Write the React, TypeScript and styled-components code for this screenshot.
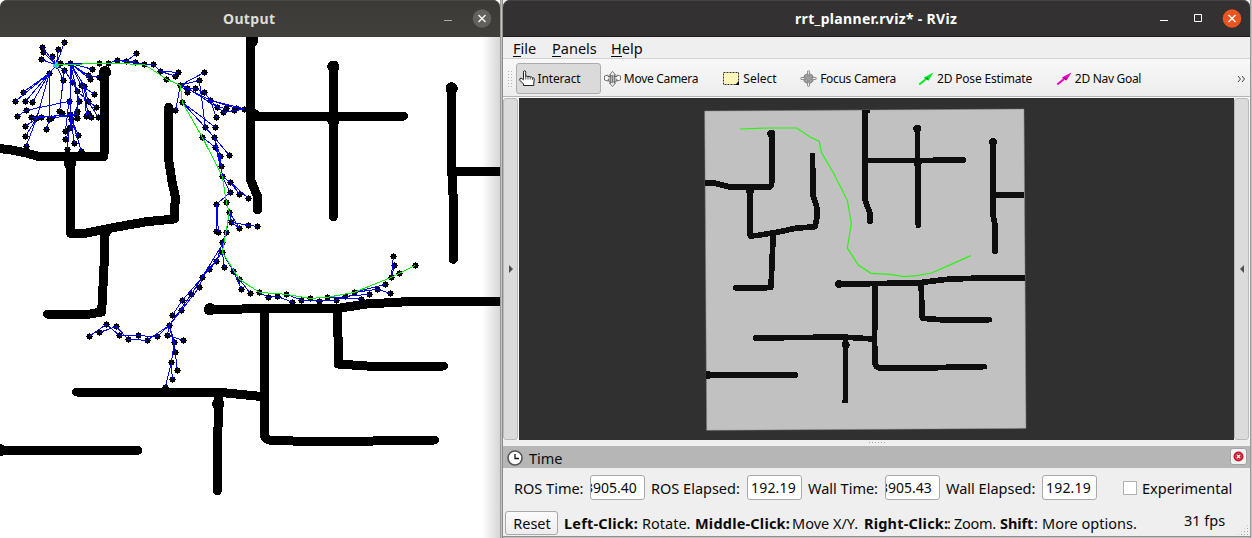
import React from 'react';
import styled, { createGlobalStyle } from 'styled-components';

const GlobalStyle = createGlobalStyle`
  * { box-sizing: border-box; }
  body { margin: 0; background: #c4c4c4; overflow: hidden; }
`;

const Desktop = styled.div`
  display: grid;
  grid-template-columns: 500px 3px 747px 2px;
  width: 1252px;
  height: 538px;
  overflow: hidden;
  font-family: 'Noto Sans', 'Open Sans', sans-serif;
  color: #0a0a0a;
`;
const Gap = styled.div`
  background: linear-gradient(90deg, #9a9a9a 0 1px, #c2c2c2 1px 2px, #8c8c8c 2px);
`;
const OutputWindow = styled.section`
  display: flex;
  flex-direction: column;
  height: 538px;
  background: #fff;
`;
const RvizWindow = styled.section`
  display: flex;
  flex-direction: column;
  height: 537px;
  background: #efefef;
  border-bottom: 1px solid #8f8f8f;
`;
const TitleBar = styled.header<{ $focused?: boolean }>`
  display: grid;
  grid-template-columns: 1fr auto 1fr;
  align-items: center;
  height: 37px;
  flex: none;
  border-radius: 7px 7px 0 0;
  background: ${p => (p.$focused ? '#333132' : 'linear-gradient(#3b3a37, #403f3c)')};
  box-shadow: inset 0 1px 0 ${p => (p.$focused ? '#454344' : '#4c4b48')}${p => (p.$focused ? ', inset 0 -1px 0 #1f1e1e' : '')};
  color: ${p => (p.$focused ? '#fff' : '#dedcd8')};
`;
const Controls = styled.div<{ $right: number }>`
  grid-column: 3;
  display: flex;
  justify-content: flex-end;
  align-items: center;
  padding-right: ${p => p.$right}px;
`;
const Text = styled.span<{ $w: number; $size?: number; $ls?: number; $bold?: boolean }>`
  display: inline-block;
  flex: none;
  width: ${p => p.$w}px;
  font-size: ${p => p.$size ?? 14.5}px;
  letter-spacing: ${p => p.$ls ?? (p.$bold ? 0.2 : 0)}px;
  font-weight: ${p => (p.$bold ? 700 : 400)};
  line-height: 20px;
  white-space: nowrap;
`;
const Title = styled(Text)`
  grid-column: 2;
`;
const PlanCanvas = styled.div`
  flex: 1;
  position: relative;
  svg { display: block; }
  &::after {
    content: '';
    position: absolute;
    inset: 0 0 0 auto;
    width: 18px;
    background: linear-gradient(90deg, rgba(0,0,0,0), rgba(0,0,0,.16));
  }
`;
const MenuBar = styled.nav`
  display: flex;
  align-items: center;
  height: 22px;
  flex: none;
  padding-left: 10px;
  background: #efefef;
  border-bottom: 1px solid #d2d2d2;
  gap: 15px;
`;
const Mnemonic = styled.span`
  box-shadow: 0 -1px 0 #0a0a0a inset;
  display: inline-block;
  line-height: 17px;
`;
const ToolBar = styled.div`
  display: flex;
  align-items: center;
  height: 38px;
  flex: none;
  padding: 2px 0 0 4px;
  background: linear-gradient(#f8f8f8, #ededed);
  border-bottom: 1px solid #b4b4b4;
`;
const Grip = styled.div`
  width: 5px;
  height: 17px;
  margin-right: 4px;
  background-image: radial-gradient(circle, #b5b5b5 0.8px, transparent 0.9px);
  background-size: 3px 3px;
`;
const Tool = styled.button<{ $w: number; $active?: boolean }>`
  display: flex;
  align-items: center;
  flex: none;
  gap: 2px;
  width: ${p => p.$w}px;
  height: 31px;
  padding: 0 0 0 2px;
  color: inherit;
  font-family: inherit;
  border: 1px solid ${p => (p.$active ? '#adadad' : 'transparent')};
  border-radius: 3px;
  background: ${p => (p.$active ? '#dadada' : 'transparent')};
  svg { display: block; flex: none; }
`;
const Overflow = styled.div`
  margin-left: auto;
  padding-right: 4px;
  svg { display: block; }
`;
const Center = styled.div`
  display: grid;
  grid-template-columns: 16px 715px 16px;
  height: 343px;
  flex: none;
  padding-top: 1px;
  background: #fafafa;
`;
const DockHandle = styled.div<{ $side: 'left' | 'right' }>`
  display: flex;
  align-items: center;
  justify-content: center;
  margin: 0 1px 0 0;
  background: #dbdbdb;
  border: 1px solid #b9b9b9;
  border-radius: 3px;
  &::after {
    content: '';
    border: 4px solid transparent;
    border-width: 4px ${p => (p.$side === 'right' ? 4 : 0)}px 4px ${p => (p.$side === 'left' ? 4 : 0)}px;
    border-${p => (p.$side === 'left' ? 'left' : 'right')}-color: #4e4e4e;
  }
`;
const View = styled.div`
  background: #303030;
  svg { display: block; }
`;
const Splitter = styled.div`
  display: flex;
  justify-content: center;
  padding-top: 1px;
  height: 6px;
  flex: none;
  &::after {
    content: '';
    width: 18px;
    height: 3px;
    background-image: radial-gradient(circle, #a5a5a5 0.8px, transparent 0.9px);
    background-size: 3px 3px;
  }
`;
const PanelHeader = styled.div`
  display: flex;
  align-items: center;
  height: 22px;
  flex: none;
  gap: 6px;
  padding: 1px 3px 0 4px;
  background: #b6b6b6;
`;
const PanelClose = styled.button`
  display: grid;
  place-items: center;
  width: 17px;
  height: 17px;
  margin: -2px 0 0 auto;
  padding: 0;
  border: 1px solid #a2a2a2;
  border-radius: 3px;
  background: #f6f6f6;
`;
const TimeRow = styled.div`
  display: flex;
  align-items: center;
  height: 39px;
  flex: none;
  padding-left: 11px;
  > ${Text} { padding-top: 1px; }
`;
const Field = styled.div<{ $clipped?: boolean }>`
  display: flex;
  justify-content: flex-end;
  align-items: center;
  flex: none;
  width: 55px;
  height: 25px;
  margin-right: 6px;
  padding-right: ${p => (p.$clipped ? 3 : 1)}px;
  overflow: hidden;
  border: 1px solid #a9a9a9;
  border-radius: 3px;
  background: #fff;
`;
const CheckBox = styled.div`
  width: 14px;
  height: 14px;
  margin: 0 5px 0 20px;
  border: 1px solid #b2b2b2;
  background: #fff;
`;
const StatusRow = styled.div`
  display: flex;
  align-items: center;
  flex: 1;
  padding: 2px 0 0 2px;
`;
const Reset = styled.button`
  display: flex;
  align-items: center;
  width: 53px;
  height: 24px;
  margin-right: 6px;
  padding: 1px 0 0 6px;
  font-family: inherit;
  color: inherit;
  border: 1px solid #a9a9a9;
  border-radius: 3px;
  background: linear-gradient(#fbfbfb, #ededed);
`;
const Fps = styled.div`
  display: flex;
  margin: -6px 0 0 47px;
`;
const SizeGrip = styled.div`
  align-self: flex-end;
  width: 12px;
  height: 12px;
  margin-left: 10px;
  background-image: radial-gradient(circle, #a8a8a8 0.8px, transparent 0.9px);
  background-size: 3px 3px;
  clip-path: polygon(100% 0, 100% 100%, 0 100%);
`;

/* Drawing units are a third of a pixel. */
const nodes = [
  127,142,193,127,175,149,130,157,123,178,157,169,169,195,181,191,211,190,193,210,148,220,277,208,265,227,271,238,
  298,231,190,241,217,246,243,256,254,259,283,283,231,274,69,277,46,304,77,304,97,307,207,304,238,304,264,304,289,322,
  79,331,52,349,179,334,186,341,231,334,230,344,94,352,110,355,125,352,149,358,155,354,211,344,215,358,232,355,
  259,349,265,340,273,352,295,352,139,388,76,379,196,394,208,385,210,382,235,406,76,409,196,418,223,430,78,440,
  202,448,244,453,298,190,325,190,352,181,379,184,409,160,406,186,433,193,460,193,481,214,535,217,527,229,500,238,
  541,256,613,217,598,241,562,264,586,265,613,277,562,277,547,307,527,331,631,301,652,322,679,325,709,325,733,327,
  670,337,704,332,649,352,616,382,646,382,607,412,643,412,646,442,661,469,688,466,664,499,667,529,691,547,691,577,
  719,583,745,595,679,607,649,613,688,637,695,667,719,685,745,676,772,679,648,694,655,697,679,697,667,727,667,757,
  650,784,673,802,628,808,700,814,718,838,725,868,751,880,778,877,805,892,832,889,859,883,878,907,904,900,931,895,
  958,903,982,892,1009,900,1037,889,1063,877,1084,897,1108,883,1132,868,1171,880,1156,853,1174,832,1198,820,
  1183,796,1180,769,1246,796,607,832,598,862,574,883,547,901,544,931,517,946,508,976,502,1006,472,1009,523,1027,
  550,1021,526,1057,514,1087,532,1111,517,1138,496,1162,268,1009,299,997,319,973,349,980,358,1006,385,1018,
  415,1006,442,1021,
];
const snap = (v: number) => Math.floor(v / 3) * 3;
const nodePath = Array.from({ length: nodes.length / 2 }, (_, i) => {
  const x = snap(nodes[2 * i]);
  const y = snap(nodes[2 * i + 1]);
  return `M${x - 6} ${y - 6}h15v15h-15zM${x - 9} ${y}h21v3h-21zM${x} ${y - 9}h3v21h-3z`;
}).join('');

const edges = `
M169 195L127 142M169 195L193 127M169 195L175 149M169 195L130 157M169 195L123 178M169 195L157 169M169 195L148 220M169 195L193 210
M169 195L211 190M148 220L69 277M148 220L46 304M148 220L77 304M148 220L97 307M148 220V358M148 220L110 355L78 440
M169 195L190 241M193 210L179 334M193 210L217 246M211 190L277 208M211 190L265 227M211 190L271 238M265 227L298 231
M211 190L243 256L283 283M211 190L254 259L264 304M211 190L231 274L289 322M211 190V385L196 418M211 190L217 246L231 274V334
M79 331L207 304M79 331L52 349M94 352L230 344L155 354M110 355L125 352L211 344M76 379L110 355L76 409M149 358L139 388
M243 256L265 340L273 352M254 259L259 349M264 304L295 352M231 274L238 304L215 358L244 453M215 358L235 406M207 304L196 394M211 344L223 430M208 385L202 448M232 334V355
M211 190L298 190L325 190L352 181L406 186M379 184L409 160M352 181L433 193L460 193L481 214L535 217M481 214L527 229M433 193L500 238L541 256
M541 256L613 217M541 256L598 241L616 382M541 256L562 264L586 265L613 277M541 256L527 331M541 256L631 301L709 325M541 256L562 277M562 264L652 322L679 325M613 277L631 301L733 327M631 301L649 352M631 301L670 337L704 332L733 327
M547 307L616 382M547 307L646 382M547 307L643 412M607 412L646 442M643 412L688 466M643 412L661 469L667 529M643 412L664 499M648 442L661 499
M667 529L691 547L719 583M691 547L745 595M667 529L691 577L649 613L648 694M651 613L655 697M667 529L679 607L688 637L695 667L745 676L772 679M688 637L719 685M695 667L719 685M688 637L679 697L667 727V757
M667 727L650 784L628 808L607 832L547 901L517 946M667 757L607 832L598 862L544 931L508 976M660 745L574 883L508 976M667 757L673 802M667 757L700 814L718 838L778 877
M700 814L725 868M718 838L751 880M778 877L805 892L832 889L878 907M778 877L859 883L904 900L958 903L1009 900M859 883L931 895L982 892L1084 897M1009 900L1037 889L1108 883M1063 877L1132 868L1171 880M1063 877L1156 853M1063 877L1174 832L1180 769M1174 832L1183 796
M508 976L472 1009L358 1006L319 973L268 1009M508 976L472 1000L442 1021L385 1018L349 980L299 997M508 976L502 1006L550 1021M508 976L526 1057L532 1111M508 976L523 1027L514 1087L517 1138M523 1027L514 1087L496 1162`;

const planWalls = `
M0 446L30 449L75 458L115 469H312L315 217M211 480L212 700L245 702L350 681L440 665L523 657L526 590L517 550L506 480L506 322
M315 690L312 800L305 936L270 942H142M753 111L752 540L772 588V630M753 348H1211M1000 200V650M1353 263L1355 510L1360 600V778M1355 513H1500
M630 928L1020 924L1100 912L1240 904L1500 903M792 925V1185L793 1305Q795 1318 815 1322L1000 1325L1304 1320M1013 925L1015 1092L1100 1098H1330
M230 1176H650L790 1190M655 1190L652 1472M0 1351H413`;

const planBlobs = [[315, 217], [210, 490], [757, 121], [1000, 200], [1000, 362], [1355, 265], [630, 928], [655, 1212], [764, 346], [0, 1351], [316, 694]];

const mapWalls = `
M15 249H42L90 261H205Q215 262 215 250V100M150 270L151 408L175 406L240 395L285 385L345 380L351 350L350 320L340 290L337 160
M218 400V440L213 562L190 564H108M495 30V300L510 340V364M500 182L700 181L790 180M652 85L655 376M878 125L880 350L885 375V454M885 285H973
M415 553L660 548L740 538L840 534H975M525 550V670L523 710L526 795Q530 804 545 804H690L765 801L853 800M663 545L667 655L720 659H868
M166 714L430 711L520 717M437 720L436 908M19 825H286`;

const PlanDrawing = () => (
  <svg width="500" height="501" viewBox="0 111 1500 1503" shapeRendering="crispEdges" fill="none">
    <path d={planWalls} stroke="#000" strokeWidth="27" strokeLinecap="round" strokeLinejoin="round" />
    {planBlobs.map(([x, y]) => <circle key={`${x}-${y}`} cx={x} cy={y} r="18.500" fill="#000" />)}
    <path d={nodePath} fill="#000" />
    <path d={edges} stroke="#0000f0" strokeWidth="3" />
    <path d="M160 196H178M169 187V205" stroke="#2fc4ee" strokeWidth="7" />
    <path d="M169 195L298 190L433 193L500 238L541 256L547 307L607 412L667 529L679 607L688 637L667 757L718 838L778 877L859 883L931 895L982 892L1063 877L1174 832L1246 796" stroke="#00f000" strokeWidth="3" />
  </svg>
);

const MapDrawing = () => (
  <svg width="715" height="342" viewBox="-543 -6 2145 1026" fill="none">
    <path d="M14 33L972 27L978 985L20 991Z" fill="#c1c1c1" stroke="#828282" strokeWidth="1.500" />
    <g shapeRendering="crispEdges">
      <path d={mapWalls} stroke="#0e0e0e" strokeWidth="17" strokeLinejoin="round" />
      {[[214, 101], [652, 86], [653, 190], [879, 126], [417, 552], [150, 274], [437, 734]].map(([x, y]) => (
        <circle key={`${x}-${y}`} cx={x} cy={y} r="12" fill="#0e0e0e" />
      ))}
      {[[790, 180], [655, 376], [885, 454], [510, 364], [868, 659], [853, 800], [286, 825], [108, 564], [166, 714]].map(([x, y]) => (
        <circle key={`${x}-${y}`} cx={x} cy={y} r="8.500" fill="#0e0e0e" />
      ))}
      <path d="M487 30h22v10h-22zM19 814h10v22h-10z" fill="#0e0e0e" />
    </g>
    <path d="M120 87L210 84H290L332 112L358 124L364 157L400 218L442 301L454 370L442 444L475 495L513 520L570 523L612 530L650 527L695 519L752 494L812 467" stroke="#2bf50f" strokeWidth="3.600" />
  </svg>
);

const HandIcon = () => (
  <svg width="16" height="17" viewBox="0 0 16 17">
    <path d="M4.500 9.500V2.200q0-1.500 1.100-1.500T6.700 2.200v4.200q1.200-.9 2.200.2 1.400-.7 2.300.4 1.500-.5 2.100.7 1.800-.2 2 1.200L14.800 13v2.500H4.500V14L.8 10.200q-.3-2 1.200-2.200L4.500 9.800" fill="#fff" stroke="#222" strokeLinejoin="round" />
    <path d="M6.800 6v3.500M9 6.500v3M11.200 7v2.500M13.400 7.700V10" stroke="#222" strokeWidth=".8" />
  </svg>
);
const MoveIcon = () => (
  <svg width="17" height="16" viewBox="0 0 17 16" fill="none" stroke="#555" strokeWidth=".8">
    <circle cx="8.500" cy="8" r="4.200" fill="#e6e6e6" />
    <path d="M7 4H5.500l3-3.500 3 3.500H10v1.500l3 0V4l3.500 1v4L13 10V8.500M7 4v1.500H4V4L.5 5v4L4 10V8.500M7 12H5.500l3 3.500 3-3.500H10v-1.500M7 12v-1.500" fill="#fafafa" />
    <path d="M6.500 4.500v7M8.500 3.500v9M10.500 4.500v7M4.500 6h8M4.500 8h8M4.500 10h8" strokeWidth=".6" />
  </svg>
);
const SelectIcon = () => (
  <svg width="17" height="14" viewBox="0 0 17 14">
    <rect x=".5" y=".5" width="15" height="12" fill="#fdf6ba" stroke="#333" strokeDasharray="2 1" />
    <path d="M12 13l4-4v4z" fill="#000" />
  </svg>
);
const FocusIcon = () => (
  <svg width="17" height="17" viewBox="0 0 17 17" fill="none">
    <circle cx="8.500" cy="8.500" r="4.800" fill="#d8d8d8" stroke="#777" strokeWidth="1.100" />
    <path d="M7.500 1q1-.8 2 0v6.500H16q.8 1 0 2H9.500V16q-1 .8-2 0V9.500H1q-.8-1 0-2h6.500z" fill="#e2e2e2" stroke="#808080" strokeWidth=".8" />
    <path d="M6 5v7M11 5v7M5 6h7M5 11h7M8.500 4v9M4 8.500h9" stroke="#888" strokeWidth=".7" />
  </svg>
);
const ArrowIcon = ({ color, dark }: { color: string; dark: string }) => (
  <svg width="16" height="14" viewBox="0 0 16 14">
    <path d="M1.300 12.500L8 7" stroke={color} strokeWidth="2.200" />
    <path d="M15.500.5L5.800 5.500l4.700 3z" fill={color} />
    <path d="M6.500 6l3.500-.5.5 3z" fill={dark} />
  </svg>
);

const labelOf = (word: string) => <><Mnemonic>{word[0]}</Mnemonic>{word.slice(1)}</>;

export default function App() {
  return (
    <>
      <GlobalStyle />
      <Desktop>
        <OutputWindow>
          <TitleBar>
            <Title $w={54} $size={14} $ls={0.35} $bold>Output</Title>
            <Controls $right={8}>
              <svg width="54" height="20" viewBox="0 0 54 20" fill="none">
                <path d="M6 11.500h8" stroke="#aaa8a5" />
                <circle cx="44" cy="9.500" r="9.300" fill="#62615f" />
                <path d="M40.500 6l7 7M47.500 6l-7 7" stroke="#f2f2f2" strokeWidth="1.500" />
              </svg>
            </Controls>
          </TitleBar>
          <PlanCanvas><PlanDrawing /></PlanCanvas>
        </OutputWindow>
        <Gap />
        <RvizWindow>
          <TitleBar $focused>
            <Title $w={163} $size={14} $ls={0.33} $bold>rrt_planner.rviz* - RViz</Title>
            <Controls $right={8}>
              <svg width="84" height="20" viewBox="0 0 84 20" fill="none">
                <path d="M2 11.500h8M36.500 5.500h7v7h-7z" stroke="#fff" />
                <circle cx="74" cy="9.500" r="9.300" fill="#e95420" />
                <path d="M70.500 6l7 7M77.500 6l-7 7" stroke="#fff" strokeWidth="1.400" />
              </svg>
            </Controls>
          </TitleBar>
          <MenuBar>
            <Text $w={24}>{labelOf('File')}</Text>
            <Text $w={44}>{labelOf('Panels')}</Text>
            <Text $w={34}>{labelOf('Help')}</Text>
          </MenuBar>
          <ToolBar>
            <Grip />
            <Tool $w={85} $active><HandIcon /><Text $w={44} $size={12} $ls={-0.15}>Interact</Text></Tool>
            <Tool $w={119}><MoveIcon /><Text $w={76} $size={12} $ls={-0.3}>Move Camera</Text></Tool>
            <Tool $w={77}><SelectIcon /><Text $w={36} $size={12}>Select</Text></Tool>
            <Tool $w={118}><FocusIcon /><Text $w={78} $size={12} $ls={-0.3}>Focus Camera</Text></Tool>
            <Tool $w={138}><ArrowIcon color="#00ed2c" dark="#008c24" /><Text $w={97} $size={12} $ls={-0.17}>2D Pose Estimate</Text></Tool>
            <Tool $w={90}><ArrowIcon color="#f000c8" dark="#8b007c" /><Text $w={68} $size={12} $ls={-0.3}>2D Nav Goal</Text></Tool>
            <Overflow>
              <svg width="9" height="8" viewBox="0 0 9 8" fill="none" stroke="#444"><path d="M1 1l2.500 3L1 7M5 1l2.500 3L5 7" /></svg>
            </Overflow>
          </ToolBar>
          <Center>
            <DockHandle $side="left" />
            <View><MapDrawing /></View>
            <DockHandle $side="right" />
          </Center>
          <Splitter />
          <PanelHeader>
            <svg width="16" height="16" viewBox="0 0 16 16" fill="none">
              <circle cx="8" cy="8" r="7" fill="#fff" stroke="#555" strokeWidth="1.600" />
              <path d="M8 4v4.500h4" stroke="#111" strokeWidth="1.300" />
            </svg>
            <Text $w={40}>Time</Text>
            <PanelClose>
              <svg width="11" height="11" viewBox="0 0 11 11"><circle cx="5.500" cy="5.500" r="5" fill="#c7162b" /><path d="M4 4l3 3M7 4l-3 3" stroke="#fff" strokeWidth="1.300" /><circle cx="5.500" cy="5.500" r="3" fill="none" stroke="#e98c97" strokeWidth=".5" /></svg>
            </PanelClose>
          </PanelHeader>
          <TimeRow>
            <Text $w={76}>ROS Time:</Text>
            <Field $clipped><Text $w={56} $size={14}>3905.40</Text></Field>
            <Text $w={96}>ROS Elapsed:</Text>
            <Field><Text $w={49} $size={14} $ls={0.2}>192.19</Text></Field>
            <Text $w={77}>Wall Time:</Text>
            <Field $clipped><Text $w={56} $size={14}>3905.43</Text></Field>
            <Text $w={96}>Wall Elapsed:</Text>
            <Field><Text $w={49} $size={14} $ls={0.2}>192.19</Text></Field>
            <CheckBox />
            <Text $w={92}>Experimental</Text>
          </TimeRow>
          <StatusRow>
            <Reset><Text $w={40}>Reset</Text></Reset>
            <Text $w={78} $bold>Left-Click:</Text>
            <Text $w={53}>Rotate.</Text>
            <Text $w={97} $bold>Middle-Click:</Text>
            <Text $w={72}>Move X/Y.</Text>
            <Text $w={83} $bold>Right-Click:</Text>
            <Text $w={7}>:</Text>
            <Text $w={46} $ls={-0.3}>Zoom.</Text>
            <Text $w={34} $bold $ls={-0.1}>Shift</Text>
            <Text $w={8}>:</Text>
            <Text $w={95}>More options.</Text>
            <Fps><Text $w={43}>31 fps</Text></Fps>
            <SizeGrip />
          </StatusRow>
        </RvizWindow>
        <Gap />
      </Desktop>
    </>
  );
}
